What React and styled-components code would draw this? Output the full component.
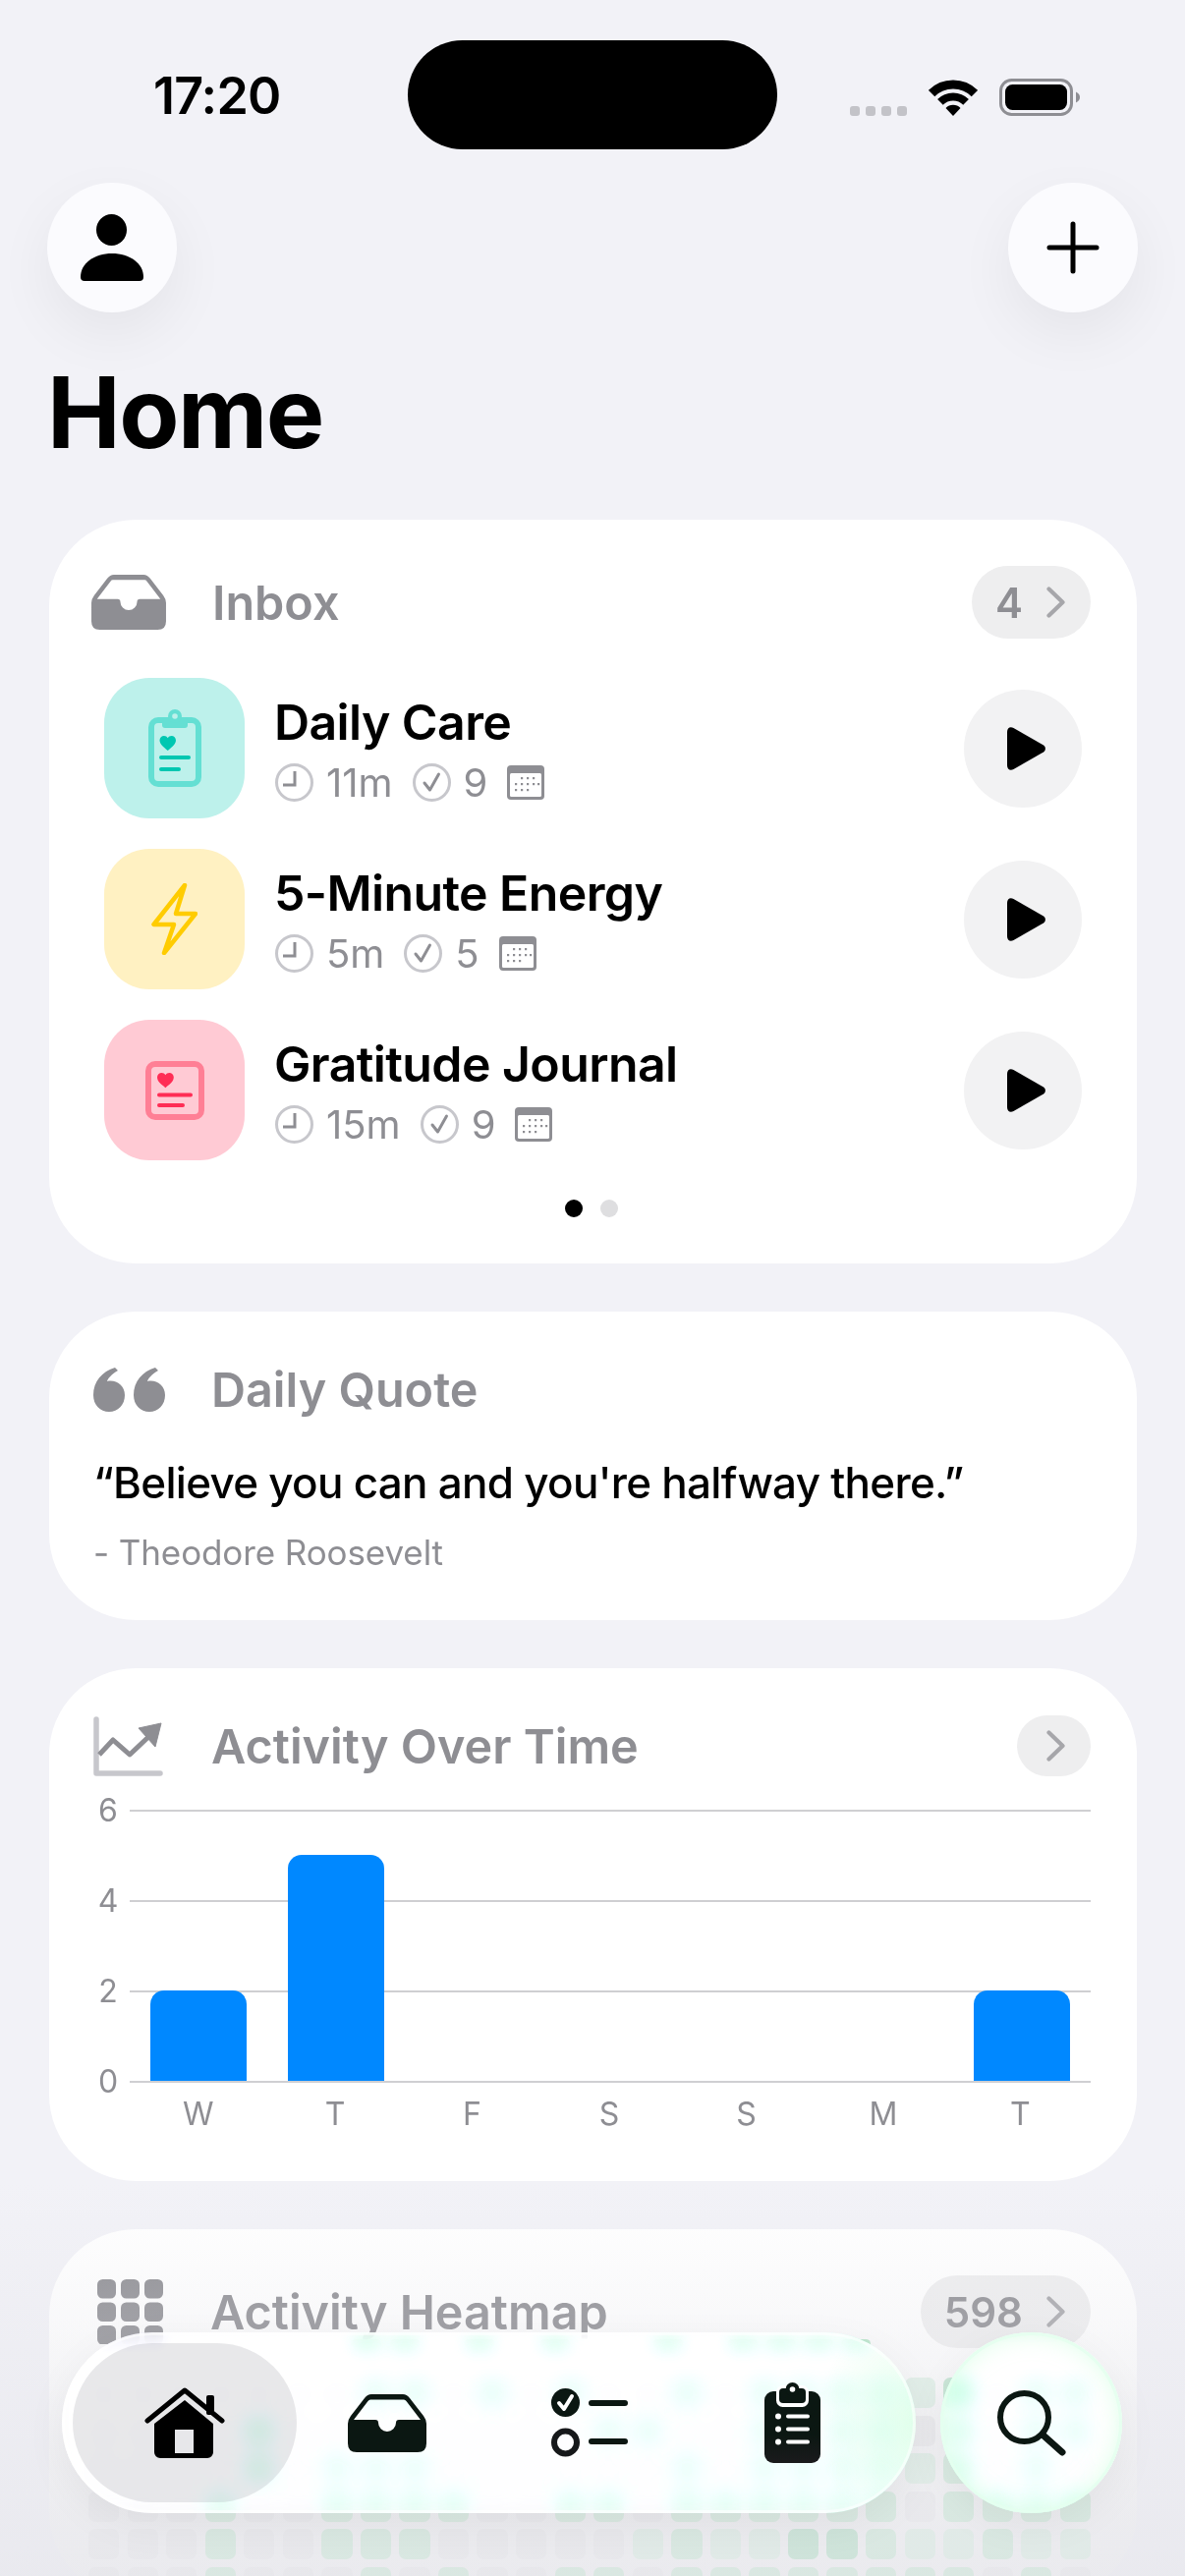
import React from 'react'
import styled, { createGlobalStyle } from 'styled-components'

const Global = createGlobalStyle`
  html, body { margin: 0; padding: 0; background: #f2f2f7; }
  * { box-sizing: border-box; }
`

const Page = styled.div`
  position: relative;
  width: 1206px;
  height: 2622px;
  overflow: hidden;
  background: #f2f2f7;
  font-family: Inter, "Noto Sans", sans-serif;
  color: #000;
`

const StatusBar = styled.div`
  display: grid;
  grid-template-columns: 415px 376px 1fr;
  height: 186px;
  padding-top: 41px;
`

const Time = styled.div`
  padding-left: 156px;
  height: 111px;
  line-height: 114px;
  font-size: 52px;
  font-weight: 600;
  letter-spacing: -0.8px;
`

const Island = styled.div`
  height: 111px;
  border-radius: 56px;
  background: #000;
`

const StatusIcons = styled.div`
  display: flex;
  align-items: flex-end;
  gap: 22px;
  padding: 0 0 34px 74px;
  height: 111px;
`

const SignalDots = styled.div`
  display: flex;
  gap: 6px;
`

const SignalDot = styled.span`
  width: 10px;
  height: 10px;
  border-radius: 3px;
  background: #c3c3c8;
`

const TopBar = styled.div`
  display: flex;
  justify-content: space-between;
  padding: 0 48px;
`

const RoundButton = styled.div`
  display: flex;
  align-items: center;
  justify-content: center;
  width: 132px;
  height: 132px;
  border-radius: 50%;
  background: #fbfbfe;
  box-shadow: 0 22px 60px rgba(0, 0, 0, 0.06);
`

const Title = styled.h1`
  margin: 41px 0 48px 48px;
  font-size: 100px;
  line-height: 122px;
  font-weight: 700;
  letter-spacing: -1.5px;
`

const Cards = styled.div`
  display: flex;
  flex-direction: column;
  gap: 49px;
  padding: 0 49px 0 50px;
`

const Card = styled.section`
  border-radius: 88px;
  background: ${p => p.$fade ? 'linear-gradient(#fff 0, #fff 90px, #f4f4f6 300px)' : '#fff'};
  padding: ${p => p.$padding};
`

const Header = styled.div`
  display: flex;
  align-items: center;
  height: 74px;
`

const HeaderIcon = styled.div`
  display: flex;
  align-items: center;
  justify-content: center;
  width: 76px;
  margin-left: ${p => p.$left || 0}px;
  margin-right: ${p => p.$gap || 47}px;
`

const HeaderTitle = styled.h2`
  flex: 1;
  margin: 0;
  font-size: 48.5px;
  font-weight: 600;
  color: #8e8e93;
`

const Pill = styled.div`
  display: flex;
  align-items: center;
  justify-content: flex-end;
  gap: 24px;
  height: ${p => p.$height || 74}px;
  min-width: 75px;
  padding: 0 26px 0 24px;
  border-radius: 38px;
  background: #eeeeef;
  font-size: 42px;
  font-weight: 600;
  color: #8e8e93;
`

const List = styled.div`
  display: flex;
  flex-direction: column;
  gap: 31px;
  margin-top: 40px;
  padding: 0 9px 0 13px;
`

const Row = styled.div`
  display: flex;
  align-items: center;
`

const Tile = styled.div`
  display: flex;
  align-items: center;
  justify-content: center;
  width: 143px;
  height: 143px;
  margin-right: 30px;
  border-radius: 46px;
  background: ${p => p.$color};
`

const RowBody = styled.div`
  flex: 1;
`

const RowTitle = styled.div`
  font-size: 50px;
  line-height: 60px;
  font-weight: 560;
  letter-spacing: -0.6px;
`

const Meta = styled.div`
  display: flex;
  align-items: center;
  height: 44px;
  margin-top: 10px;
  padding-left: 1px;
  font-size: 40px;
  color: #8e8e93;
`

const MetaText = styled.span`
  margin: 0 20px 0 13px;
`

const PlayButton = styled.div`
  display: flex;
  align-items: center;
  justify-content: center;
  width: 120px;
  height: 120px;
  padding-left: 7px;
  border-radius: 50%;
  background: #f2f2f3;
`

const Dots = styled.div`
  display: flex;
  justify-content: center;
  gap: 18px;
  margin-top: 40px;
`

const Dot = styled.span`
  width: 18px;
  height: 18px;
  border-radius: 50%;
  background: ${p => p.$on ? '#000' : '#dedee0'};
`

const QuoteText = styled.p`
  margin: 28px 0 0;
  font-size: 44px;
  line-height: 60px;
  font-weight: 500;
  letter-spacing: -0.72px;
`

const QuoteAuthor = styled.p`
  margin: 17px 0 0;
  font-size: 35px;
  line-height: 48px;
  letter-spacing: -0.1px;
  color: #8e8e93;
`

const Chart = styled.div`
  display: grid;
  grid-template-columns: 44px 1fr;
  margin-top: 28px;
`

const YAxis = styled.div`
  display: flex;
  flex-direction: column;
  justify-content: space-between;
  height: 316px;
  margin: -19px 0;
  text-align: center;
  font-size: 32px;
  line-height: 40px;
  color: #8e8e93;
`

const Plot = styled.div`
  display: grid;
  grid-template-columns: repeat(7, 1fr);
  align-items: end;
  height: 278px;
  background: repeating-linear-gradient(#cfcfd2 0 2px, transparent 2px 92px);
  border-bottom: 2px solid #cfcfd2;
`

const BarSlot = styled.div`
  display: flex;
  justify-content: center;
`

const Bar = styled.div`
  width: 98px;
  border-radius: 14px 14px 0 0;
  background: #0088ff;
`

const XAxis = styled.div`
  display: grid;
  grid-template-columns: repeat(7, 1fr);
  grid-column: 2;
  margin-top: 12px;
  padding-right: 2px;
  text-align: center;
  font-size: 32px;
  line-height: 40px;
  color: #8e8e93;
`

const HeatGrid = styled.div`
  display: grid;
  grid-template-columns: repeat(26, 1fr);
  gap: 7.6px 8.3px;
  margin-top: 30px;
`

const Cell = styled.div`
  height: ${p => p.$short ? 9 : 31}px;
  border-radius: 7px;
  background: ${p => ['#eeeef0', '#e1f2e8', '#d4eede', '#c0e6d0'][p.$level]};
`

const Fade = styled.div`
  position: absolute;
  left: 0;
  right: 0;
  top: 2222px;
  bottom: 0;
  background: linear-gradient(rgba(226, 226, 232, 0), rgba(226, 226, 232, 0.22) 35%, rgba(224, 224, 230, 0.48));
  pointer-events: none;
`

// the mint slivers the glass picks up along its top edge
const EdgeGlint = styled.div`
  position: absolute;
  left: 90px;
  top: 2381px;
  width: 988px;
  display: grid;
  grid-template-columns: repeat(26, 1fr);
  column-gap: 8.3px;
`

const Dock = styled.nav`
  position: absolute;
  left: 63px;
  top: 2374px;
  display: flex;
  gap: 25px;
`

const Glass = styled.div`
  height: 184px;
  border-radius: 92px;
  background: rgba(255, 255, 255, 0.72);
  backdrop-filter: blur(9px) saturate(7) brightness(1.07);
  box-shadow: 0 12px 44px rgba(0, 0, 0, 0.05), inset 0 0 0 3px rgba(255, 255, 255, 0.55);
`

const TabBar = styled(Glass)`
  display: flex;
  align-items: center;
  width: 869px;
  padding-left: 22px;
  background:
    radial-gradient(ellipse 100px 120px at 100% 50%, rgba(205, 255, 222, 0.6), rgba(205, 255, 222, 0)),
    rgba(255, 255, 255, 0.72);
`

const Tab = styled.div`
  display: flex;
  align-items: center;
  justify-content: center;
  flex: none;
  height: 162px;
  width: ${p => p.$active ? 228 : 206}px;
  margin: ${p => p.$active ? '0 -11px' : 0};
  border-radius: 81px;
  background: ${p => p.$active ? 'rgba(120, 120, 128, 0.17)' : 'transparent'};
`

const SearchButton = styled(Glass)`
  display: flex;
  align-items: center;
  justify-content: center;
  width: 185px;
  box-shadow:
    0 12px 44px rgba(0, 0, 0, 0.05),
    inset 0 0 0 3px rgba(228, 255, 238, 0.85),
    inset 0 0 26px rgba(205, 255, 222, 0.75);
`

const DARK = '#0b1712'
const GREY = '#8e8e93'
const RING = '#c7c7cc'

const HEART = 'M8 14.5C3 10.5 0 8 0 4.4 0 1.8 2 0 4.3 0 5.8 0 7.2.8 8 2.2 8.8.8 10.2 0 11.7 0 14 0 16 1.8 16 4.4 16 8 13 10.5 8 14.5Z'
const INBOX = 'M24 0H56Q60 0 63 4L77 22Q80 26 80 30V50Q80 59 71 59H9Q0 59 0 50V30Q0 26 3 22L17 4Q20 0 24 0ZM23 5.5Q21.5 5.5 20.5 7L6 26H28Q31 26 31 29A9 9 0 0 0 49 29Q49 26 52 26H74L59.5 7Q58.5 5.5 57 5.5Z'

const Wifi = () => (
  <svg width="50" height="37" viewBox="0 0 50 37">
    <g fill="none" stroke="#000">
      <path d="M3.1 14.1A31 31 0 0 1 46.9 14.1" strokeWidth="9" />
      <path d="M11.9 22.9A18.5 18.5 0 0 1 38.1 22.9" strokeWidth="8" />
    </g>
    <path d="M25 37L17.5 29A10.5 10.5 0 0 1 32.5 29Z" />
  </svg>
)

const Battery = () => (
  <svg width="82" height="38" viewBox="0 0 82 38">
    <rect x="1.5" y="1.5" width="72" height="35" rx="11" fill="none" stroke={GREY} strokeWidth="3" />
    <rect x="6" y="6" width="63" height="26" rx="7.5" />
    <path d="M78 13.5C81 15 82 17 82 19S81 23 78 24.5Z" fill={GREY} />
  </svg>
)

const PersonIcon = () => (
  <svg width="64" height="68" viewBox="0 0 64 68">
    <ellipse cx="31.5" cy="16" rx="15.5" ry="16" />
    <path d="M0 64C0 50 14 40 32 40S64 50 64 64Q64 68 60 68H4Q0 68 0 64Z" />
  </svg>
)

const PlusIcon = () => (
  <svg width="54" height="54" viewBox="0 0 54 54" fill="none" stroke="#000" strokeWidth="5" strokeLinecap="round">
    <path d="M27 3V51M3 27H51" />
  </svg>
)

const InboxIcon = ({ width = 76, height = 56, fill = GREY }) => (
  <svg width={width} height={height} viewBox="0 0 80 59">
    <path d={INBOX} fill={fill} fillRule="evenodd" />
  </svg>
)

const QuoteIcon = () => (
  <svg width="73" height="45" viewBox="0 0 73 45" fill={GREY}>
    <path d="M0 28C0 14 9 4 22 0L25 3C18 7 15 11 14 14 23 12 32 18 32 28 32 38 25 45 16 45 7 45 0 38 0 28Z" />
    <path d="M41 28C41 14 50 4 63 0L66 3C59 7 56 11 55 14 64 12 73 18 73 28 73 38 66 45 57 45 48 45 41 38 41 28Z" />
  </svg>
)

const TrendIcon = () => (
  <svg width="71" height="61" viewBox="0 0 71 61" fill="none">
    <path d="M3 3V58H68" stroke={RING} strokeWidth="5.5" strokeLinecap="round" strokeLinejoin="round" />
    <path d="M6 39L20 24L37 39L56 21" stroke={GREY} strokeWidth="5" strokeLinejoin="round" />
    <path d="M46 12L69 7L63 31Z" fill={GREY} stroke={GREY} strokeWidth="1" strokeLinejoin="round" />
  </svg>
)

const GridIcon = () => (
  <svg width="67" height="66" viewBox="0 0 67 66" fill={GREY}>
    {[0, 23.5, 47].map(y => [0, 24, 48].map(x => (
      <rect key={`${x}-${y}`} x={x} y={y} width="19" height="19.5" rx="5.5" />
    )))}
  </svg>
)

const Chevron = () => (
  <svg width="19" height="32" viewBox="0 0 19 32" fill="none" stroke="#a6a6aa" strokeWidth="4.2" strokeLinecap="round" strokeLinejoin="round">
    <path d="M2.5 2.5L16.5 16L2.5 29.5" />
  </svg>
)

const ClockIcon = () => (
  <svg width="39" height="39" viewBox="0 0 39 39" fill="none">
    <circle cx="19.5" cy="19.5" r="18" stroke={RING} strokeWidth="3" />
    <path d="M20 8V22H8" stroke={GREY} strokeWidth="3" />
  </svg>
)

const CheckIcon = () => (
  <svg width="39" height="39" viewBox="0 0 39 39" fill="none">
    <circle cx="19.5" cy="19.5" r="18" stroke={RING} strokeWidth="3" />
    <path d="M12 20L17.5 27L26.5 11" stroke={GREY} strokeWidth="3" strokeLinecap="round" strokeLinejoin="round" />
  </svg>
)

const CalendarIcon = () => (
  <svg width="38" height="35" viewBox="0 0 38 35">
    <rect x="0" y="0" width="38" height="35" rx="4" fill={GREY} />
    <rect x="3" y="8" width="32" height="24" rx="1.5" fill="#fff" />
    <g fill={GREY}>
      {[[15, 13], [21, 13], [27, 13], [9, 19], [15, 19], [21, 19], [27, 19], [32, 19], [9, 25], [15, 25], [21, 25]].map(([x, y]) => (
        <rect key={`${x}-${y}`} x={x - 1} y={y - 1} width="2.2" height="2.2" />
      ))}
    </g>
  </svg>
)

const PlayIcon = () => (
  <svg width="39" height="44" viewBox="0 0 39 44">
    <path d="M0 5C0 1 3-1 6.500 1L37 18.500C39.500 20 39.500 24 37 25.500L6.500 43C3 45 0 43 0 39Z" />
  </svg>
)

const CareIcon = () => (
  <svg width="54" height="79" viewBox="0 0 54 79" fill="none">
    <rect x="3" y="11" width="48" height="65" rx="7" stroke="#64dfd3" strokeWidth="6" />
    <rect x="14" y="8" width="26" height="11" rx="3" fill="#64dfd3" />
    <circle cx="27" cy="7" r="7" fill="#64dfd3" />
    <circle cx="27" cy="7" r="2.800" fill="#bdf1eb" />
    <path d={HEART} fill="#00c7b1" transform="translate(11.500 27) scale(1.03)" />
    <path d="M13 49H41M13 61H31" stroke="#00c7b1" strokeWidth="4" strokeLinecap="round" />
  </svg>
)

const BoltIcon = () => (
  <svg width="47" height="73" viewBox="0 0 47 73" fill="none">
    <path d="M34 2L2.500 42H23L13 71L45 31H25Z" stroke="#ffcc00" strokeWidth="4.500" strokeLinejoin="round" />
  </svg>
)

const JournalIcon = () => (
  <svg width="60" height="60" viewBox="0 0 60 60" fill="none">
    <rect x="3" y="3" width="54" height="54" rx="7" stroke="#ff7f95" strokeWidth="6" />
    <path d={HEART} fill="#ff2d55" transform="translate(12 12) scale(1.05)" />
    <path d="M14 34.500H46M14 45H38" stroke="#ff2d55" strokeWidth="4" strokeLinecap="round" />
  </svg>
)

const HomeIcon = () => (
  <svg width="82" height="72" viewBox="0 0 82 72">
    <rect x="63" y="8" width="8" height="20" rx="2" />
    <path d="M3 34L41 3L79 34" fill="none" stroke="#000" strokeWidth="5" strokeLinecap="round" strokeLinejoin="round" />
    <path d="M41 13L70 37V66A6 6 0 0 1 64 72H16A6 6 0 0 1 10 66V37ZM31 43V67H50V43Z" fillRule="evenodd" />
  </svg>
)

const ChecklistIcon = () => (
  <svg width="78" height="70" viewBox="0 0 78 70" fill="none">
    <circle cx="14.500" cy="14.500" r="14.500" fill={DARK} />
    <path d="M8 15L13 21L21 8" stroke="#fff" strokeWidth="4" strokeLinecap="round" strokeLinejoin="round" />
    <circle cx="14.500" cy="55" r="11.500" stroke="#16181a" strokeWidth="6" />
    <path d="M41 15H75M41 54H75" stroke={DARK} strokeWidth="6" strokeLinecap="round" />
  </svg>
)

const ClipboardIcon = () => (
  <svg width="57" height="82" viewBox="0 0 57 82">
    <defs>
      <linearGradient id="clipFill" x1="0" y1="0" x2="0" y2="1">
        <stop offset="0.6" stopColor={DARK} />
        <stop offset="1" stopColor="#1a1a1c" />
      </linearGradient>
    </defs>
    <rect x="0" y="9" width="57" height="73" rx="9" fill="url(#clipFill)" />
    <rect x="12" y="3" width="33" height="22" rx="6.500" fill="#fff" />
    <rect x="15" y="6" width="27" height="15" rx="4" fill={DARK} />
    <circle cx="28.500" cy="7" r="7" fill={DARK} />
    <circle cx="28.500" cy="7" r="2.800" fill="#fff" />
    <g fill="#fff">
      <circle cx="14" cy="34.500" r="3" />
      <circle cx="14" cy="47.500" r="3" />
      <circle cx="14" cy="60.500" r="3" />
      <rect x="22" y="32.500" width="24" height="4" rx="2" />
      <rect x="22" y="45.500" width="24" height="4" rx="2" />
      <rect x="22" y="58.500" width="24" height="4" rx="2" />
    </g>
  </svg>
)

const SearchIcon = () => (
  <svg width="70" height="67" viewBox="0 0 70 67" fill="none" stroke={DARK} strokeWidth="6" strokeLinecap="round">
    <circle cx="27.500" cy="27.500" r="24.500" />
    <path d="M47 46L66 63" strokeWidth="7" />
  </svg>
)

const routines = [
  { id: 'care', title: 'Daily Care', time: '11m', steps: 9, color: '#bdf1eb', icon: <CareIcon /> },
  { id: 'energy', title: '5-Minute Energy', time: '5m', steps: 5, color: '#fff1c2', icon: <BoltIcon /> },
  { id: 'journal', title: 'Gratitude Journal', time: '15m', steps: 9, color: '#ffcad4', icon: <JournalIcon /> },
]

const bars = [2, 5, 0, 0, 0, 0, 2]
const days = ['W', 'T', 'F', 'S', 'S', 'M', 'T']

// one string per week row, one digit per column
const heat = [
  '00000001101010010111113011',
  '00002000000001100101102011',
  '00002011100000010111112010',
  '00020022220022022222202222',
  '00020022200000121133211211',
  '00020002020022022222222020',
]
const glint = '00000003303030030333300000'

function App() {
  return (
    <Page>
      <Global />
      <StatusBar>
        <Time>17:20</Time>
        <Island />
        <StatusIcons>
          <SignalDots>
            {[0, 1, 2, 3].map(i => <SignalDot key={i} />)}
          </SignalDots>
          <Wifi />
          <Battery />
        </StatusIcons>
      </StatusBar>

      <TopBar>
        <RoundButton><PersonIcon /></RoundButton>
        <RoundButton><PlusIcon /></RoundButton>
      </TopBar>

      <Title>Home</Title>

      <Cards>
        <Card $padding="47px 47px 47px 43px">
          <Header>
            <HeaderIcon><InboxIcon /></HeaderIcon>
            <HeaderTitle>Inbox</HeaderTitle>
            <Pill>4 <Chevron /></Pill>
          </Header>
          <List>
            {routines.map(r => (
              <Row key={r.id}>
                <Tile $color={r.color}>{r.icon}</Tile>
                <RowBody>
                  <RowTitle>{r.title}</RowTitle>
                  <Meta>
                    <ClockIcon />
                    <MetaText>{r.time}</MetaText>
                    <CheckIcon />
                    <MetaText>{r.steps}</MetaText>
                    <CalendarIcon />
                  </Meta>
                </RowBody>
                <PlayButton><PlayIcon /></PlayButton>
              </Row>
            ))}
          </List>
          <Dots>
            <Dot $on />
            <Dot />
          </Dots>
        </Card>

        <Card $padding="42px 47px 45px 45px">
          <Header>
            <HeaderIcon $left={-2} $gap={46}><QuoteIcon /></HeaderIcon>
            <HeaderTitle>Daily Quote</HeaderTitle>
          </Header>
          <QuoteText>“Believe you can and you're halfway there.”</QuoteText>
          <QuoteAuthor>- Theodore Roosevelt</QuoteAuthor>
        </Card>

        <Card $padding="42px 47px 48px 38px">
          <Header>
            <HeaderIcon $left={4} $gap={47}><TrendIcon /></HeaderIcon>
            <HeaderTitle>Activity Over Time</HeaderTitle>
            <Pill $height={62}><Chevron /></Pill>
          </Header>
          <Chart>
            <YAxis>
              {[6, 4, 2, 0].map(n => <span key={n}>{n}</span>)}
            </YAxis>
            <Plot>
              {bars.map((v, i) => (
                <BarSlot key={i}>
                  {v > 0 && <Bar style={{ height: v * 46 }} />}
                </BarSlot>
              ))}
            </Plot>
            <XAxis>
              {days.map((d, i) => <span key={i}>{d}</span>)}
            </XAxis>
          </Chart>
        </Card>

        <Card $fade $padding="47px 47px 0 40px">
          <Header>
            <HeaderIcon $left={4} $gap={44}><GridIcon /></HeaderIcon>
            <HeaderTitle>Activity Heatmap</HeaderTitle>
            <Pill>598 <Chevron /></Pill>
          </Header>
          <HeatGrid>
            {heat.flatMap((row, y) => row.split('').map((c, x) => (
              <Cell key={`${x}-${y}`} $level={Number(c)} />
            )))}
          </HeatGrid>
        </Card>
      </Cards>

      <Fade />

      <EdgeGlint>
        {glint.split('').map((c, x) => (
          c === '3' ? <Cell key={x} $short $level={3} /> : <span key={x} />
        ))}
      </EdgeGlint>

      <Dock>
        <TabBar>
          <Tab $active><HomeIcon /></Tab>
          <Tab><InboxIcon width={80} height={59} fill={DARK} /></Tab>
          <Tab><ChecklistIcon /></Tab>
          <Tab><ClipboardIcon /></Tab>
        </TabBar>
        <SearchButton><SearchIcon /></SearchButton>
      </Dock>
    </Page>
  )
}

export default App
